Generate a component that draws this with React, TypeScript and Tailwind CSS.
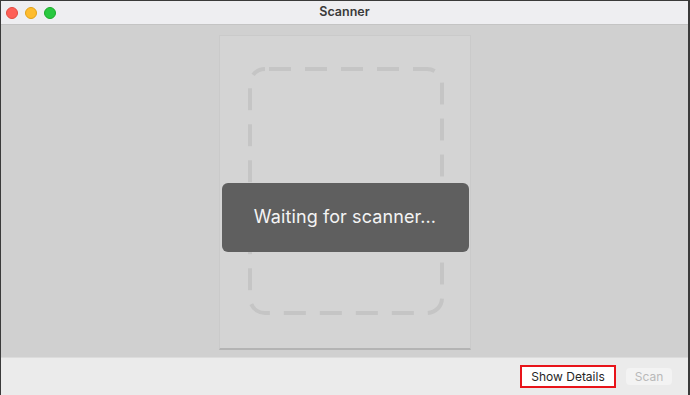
import { FC } from "react";

const font = { fontFamily: '"Inter", "Liberation Sans", sans-serif' };

const TrafficLights: FC = () => (
  <div className="flex items-center gap-[7px] pl-[5px]">
    <span className="h-[12px] w-[12px] rounded-full bg-[#fe5f57] border border-[#e24b41]" />
    <span className="h-[12px] w-[12px] rounded-full bg-[#febc2e] border border-[#e1a116]" />
    <span className="h-[12px] w-[12px] rounded-full bg-[#28c840] border border-[#1aab29]" />
  </div>
);

const Placeholder: FC = () => (
  <svg width="196" height="248" viewBox="0 0 196 248" className="block">
    <rect
      x="2"
      y="2"
      width="192"
      height="244"
      rx="15"
      fill="none"
      stroke="#c5c5c5"
      strokeWidth="4"
      strokeDasharray="22 14"
      strokeDashoffset="-4"
    />
  </svg>
);

const App: FC = () => {
  return (
    <div
      className="flex h-[395px] w-[690px] flex-col overflow-hidden border-l border-t border-r-2 border-[#3a3a3a] bg-[#d0d0d0]"
      style={font}
    >
      <div className="relative flex h-[24px] shrink-0 items-center border-b border-[#c4c4c4] bg-[#eeeef1]">
        <TrafficLights />
        <span className="absolute left-1/2 -translate-x-1/2 text-[12.5px] font-semibold text-[#3a3a3a]">
          Scanner
        </span>
      </div>

      <div className="flex flex-1 justify-center pt-[10px] pb-[7px]">
        <div className="relative flex w-[252px] justify-center border border-[#cacaca] border-b-2 border-b-[#b4b4b4] bg-[#d4d4d4] pt-[31px]">
          <div className="pl-[2px]">
            <Placeholder />
          </div>
          <div className="absolute left-[2px] right-[1px] top-[147px] flex h-[69px] items-center justify-center rounded-[6px] bg-[#5f5f5f] pb-[2px]">
            <span className="text-[18px] tracking-[0.1px] text-[#f4f4f4]">Waiting for scanner...</span>
          </div>
        </div>
      </div>

      <div className="flex h-[38px] shrink-0 items-center justify-end gap-[10px] border-t border-[#dcdcdc] bg-[#ebebeb] pr-[16px]">
        <div className="flex h-[23px] w-[96px] items-center justify-center border-2 border-[#e8141a] bg-white">
          <span className="text-[12px] text-[#262626]">Show Details</span>
        </div>
        <div className="flex h-[17px] w-[46px] items-center justify-center rounded-[4px] bg-[#f3f3f3]">
          <span className="text-[12px] text-[#b9b9b9]">Scan</span>
        </div>
      </div>
    </div>
  );
};

export default App;
